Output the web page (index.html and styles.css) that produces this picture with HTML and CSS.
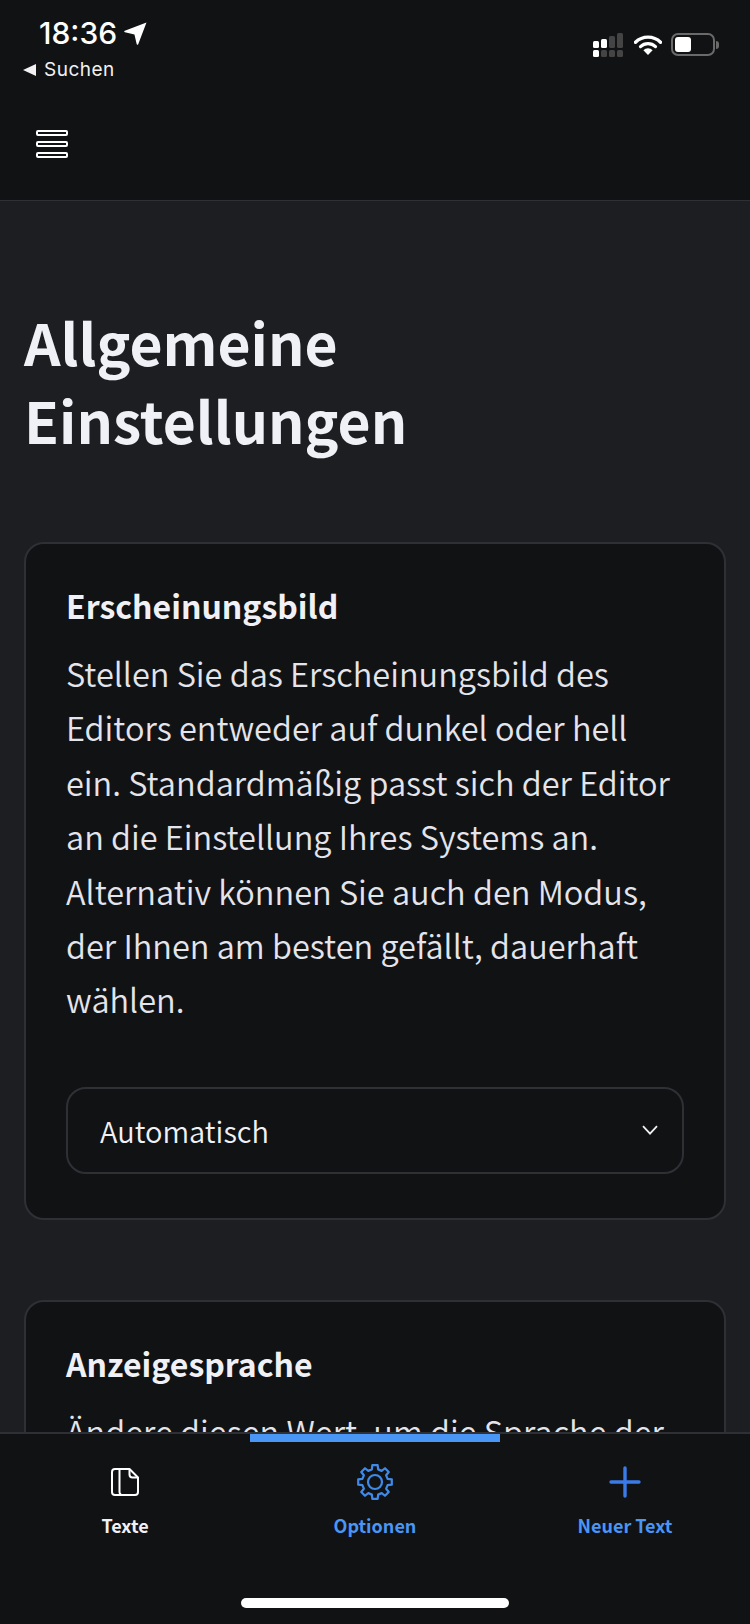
FILE: index.html
```html
<!DOCTYPE html>
<html lang="de">
<head>
    <meta charset="UTF-8">
    <meta name="viewport" content="width=device-width, initial-scale=1.0">
    <title>Allgemeine Einstellungen</title>
    <link rel="stylesheet" href="styles.css">
</head>
<body>
    <div class="app">
        <header class="topbar">
            <div class="status">
                <div class="status-left">
                    <div class="clock">
                        <span>18:36</span>
                        <svg class="arrow" width="22" height="22" viewBox="0 0 22 22"><path d="M21.500.5 13.600 21.200c-.3.7-1.300.7-1.500-.1L10 12 .9 9.900c-.8-.2-.9-1.200-.1-1.500z" fill="#fff"/></svg>
                    </div>
                    <div class="back">
                        <svg width="13" height="12" viewBox="0 0 13 12"><path d="M0 6 13 0v12z" fill="#f2f2f2"/></svg>
                        <span>Suchen</span>
                    </div>
                </div>
                <div class="status-right">
                    <svg class="signal" width="30" height="24" viewBox="0 0 30 24">
                        <g fill="#fff">
                            <rect x="0" y="8" width="6" height="7" rx="1.5"/>
                            <rect x="8" y="6" width="6" height="9" rx="1.5"/>
                            <rect x="0" y="17" width="6" height="7" rx="1.5"/>
                        </g>
                        <g fill="#444">
                            <rect x="16" y="3" width="6" height="12" rx="1.5"/>
                            <rect x="24" y="0" width="6" height="15" rx="1.5"/>
                            <rect x="8" y="17" width="6" height="7" rx="1.5"/>
                            <rect x="16" y="17" width="6" height="7" rx="1.5"/>
                            <rect x="24" y="17" width="6" height="7" rx="1.5"/>
                        </g>
                    </svg>
                    <svg class="wifi" width="28" height="21" viewBox="0 0 28 21">
                        <path d="M1.500 8.200a18 18 0 0 1 25 0" fill="none" stroke="#fff" stroke-width="3.400" stroke-linecap="round"/>
                        <path d="M6.500 12.600a11 11 0 0 1 15 0" fill="none" stroke="#fff" stroke-width="3.200" stroke-linecap="round"/>
                        <path d="M14 21 9.400 16.200a6.500 6.500 0 0 1 9.200 0z" fill="#fff"/>
                    </svg>
                    <div class="battery">
                        <div class="battery-body"><div class="battery-level"></div></div>
                        <div class="battery-nub"></div>
                    </div>
                </div>
            </div>
            <button class="menu-btn" aria-label="Menü">
                <span></span>
                <span></span>
                <span></span>
            </button>
        </header>

        <main class="content">
            <h1>Allgemeine Einstellungen</h1>

            <section class="card">
                <h2>Erscheinungsbild</h2>
                <p>Stellen Sie das Erscheinungsbild des<br>Editors entweder auf dunkel oder hell<br>ein. Standardmäßig passt sich der Editor<br>an die Einstellung Ihres Systems an.<br>Alternativ können Sie auch den Modus,<br>der Ihnen am besten gefällt, dauerhaft<br>wählen.</p>
                <div class="select">
                    <span>Automatisch</span>
                    <svg width="16" height="10" viewBox="0 0 16 10"><path d="M1 1.200 8 8.600l7-7.400" fill="none" stroke="#f0f0f3" stroke-width="1.800"/></svg>
                </div>
            </section>

            <section class="card">
                <h2>Anzeigesprache</h2>
                <p>Ändere diesen Wert, um die Sprache der Benutzeroberfläche zu wechseln.</p>
            </section>
        </main>

        <nav class="tabbar">
            <div class="tabs">
                <div class="tab">
                    <svg width="30" height="30" viewBox="0 0 30 30" fill="none" stroke="#fff" stroke-width="2" stroke-linejoin="round">
                        <path d="M19.500 2H5a3 3 0 0 0-3 3v20a3 3 0 0 0 3 3h20a3 3 0 0 0 3-3V10.500z"/>
                        <path d="M9.500 2v23a3 3 0 0 0 3 3"/>
                        <path d="M19.500 2v5.500a3 3 0 0 0 3 3H28"/>
                    </svg>
                    <span>Texte</span>
                </div>
                <div class="tab tab-active">
                    <svg width="36" height="36" viewBox="0 0 36 36" fill="none" stroke="#3f8ae8" stroke-width="2.200" stroke-linejoin="round">
                        <path d="M30.610 14.850 34.790 15.340V20.660L30.610 21.150 29.140 24.700 31.750 28 28 31.750 24.700 29.140 21.150 30.610 20.660 34.790H15.340L14.850 30.610 11.300 29.140 8 31.750 4.250 28 6.860 24.700 5.390 21.150 1.210 20.660V15.340L5.390 14.850 6.860 11.300 4.250 8 8 4.250 11.300 6.860 14.850 5.390 15.340 1.210H20.660L21.150 5.390 24.700 6.860 28 4.250 31.750 8 29.140 11.300z"/>
                        <circle cx="18" cy="18" r="7"/>
                    </svg>
                    <span>Optionen</span>
                </div>
                <div class="tab tab-new">
                    <svg width="32" height="32" viewBox="0 0 32 32" fill="none" stroke="#3a7be8" stroke-width="3.400" stroke-linecap="round">
                        <path d="M16 2v28M2 16h28"/>
                    </svg>
                    <span>Neuer Text</span>
                </div>
            </div>
            <div class="home-bar"></div>
        </nav>
    </div>
</body>
</html>
```

FILE: styles.css
```css
* {
    box-sizing: border-box;
}

body {
    margin: 0;
    background: #1d1e21;
    color: #f0f1f6;
    font-family: "Noto Sans CJK SC", "Noto Sans", sans-serif;
}

.app {
    display: flex;
    flex-direction: column;
    height: 1624px;
    overflow: hidden;
}

.topbar {
    flex: none;
    height: 201px;
    background: #111214;
    border-bottom: 1px solid #2f3036;
}

.status {
    display: flex;
    justify-content: space-between;
    height: 124px;
}

.status-left {
    padding: 16px 0 0 23px;
}

.clock {
    display: flex;
    align-items: center;
    gap: 7px;
    padding-left: 16px;
    height: 34px;
    color: #fff;
    font-family: Inter, sans-serif;
    font-size: 30px;
    font-weight: 500;
}

.arrow {
    width: 23px;
    height: 23px;
}

.back {
    display: flex;
    align-items: center;
    gap: 8px;
    margin-top: 8px;
    color: #f2f2f2;
    font-family: Inter, sans-serif;
    font-size: 19px;
    letter-spacing: 0.5px;
}

.status-right {
    display: flex;
    align-items: flex-start;
    gap: 9px;
    padding: 33px 31px 0 0;
}

.signal {
    margin-right: 2px;
}

.wifi {
    margin-top: 1px;
}

.battery {
    display: flex;
    align-items: center;
    gap: 1px;
}

.battery-body {
    width: 44px;
    height: 23px;
    padding: 2px;
    border: 2px solid #6a6a6a;
    border-radius: 7px;
}

.battery-level {
    width: 16px;
    height: 15px;
    background: #fff;
    border-radius: 3px;
}

.battery-nub {
    width: 3px;
    height: 8px;
    background: #6a6a6a;
    border-radius: 0 3px 3px 0;
}

.menu-btn {
    display: flex;
    flex-direction: column;
    gap: 5px;
    width: 32px;
    margin: 6px 0 0 36px;
    padding: 0;
    border: none;
    background: none;
}

.menu-btn span {
    display: block;
    height: 6px;
    border: 2px solid #fff;
    border-radius: 2px;
}

.content {
    flex: 1;
    min-height: 0;
    overflow: hidden;
    padding: 101px 24px 0;
}

h1 {
    margin: 0 0 84px;
    font-size: 57px;
    font-weight: 700;
    line-height: 78px;
    max-width: 500px;
}

.card {
    margin-bottom: 80px;
    padding: 38px 40px 44px;
    background: #111214;
    border: 2px solid #2f3036;
    border-radius: 20px;
}

h2 {
    margin: 0 0 18px;
    font-size: 32px;
    font-weight: 700;
    line-height: 46px;
}

.card p {
    margin: 0;
    color: #e4e5ec;
    font-size: 32.5px;
    font-weight: 350;
    line-height: 54.4px;
}

.select {
    display: flex;
    align-items: center;
    justify-content: space-between;
    height: 87px;
    margin-top: 60px;
    padding: 0 24px 0 32px;
    border: 2px solid #2f3036;
    border-radius: 20px;
    color: #f0f1f6;
    font-size: 29px;
    font-weight: 350;
}

.tabbar {
    flex: none;
    height: 192px;
    background: #111214;
    border-top: 2px solid #2f3036;
}

.tabs {
    display: grid;
    grid-template-columns: repeat(3, 250px);
    height: 164px;
}

.tab {
    display: flex;
    flex-direction: column;
    align-items: center;
    height: 120px;
    padding-top: 28px;
    font-size: 18px;
    font-weight: 700;
}

.tab svg {
    height: 40px;
}

.tab span {
    margin-top: 10px;
    line-height: 26px;
}

.tab-active {
    border-top: 8px solid #4a96f5;
    padding-top: 20px;
    color: #4a96f5;
}

.tab-new {
    color: #4a96f5;
}

.home-bar {
    width: 268px;
    height: 10px;
    margin: 0 auto;
    background: #fff;
    border-radius: 5px;
}
```
